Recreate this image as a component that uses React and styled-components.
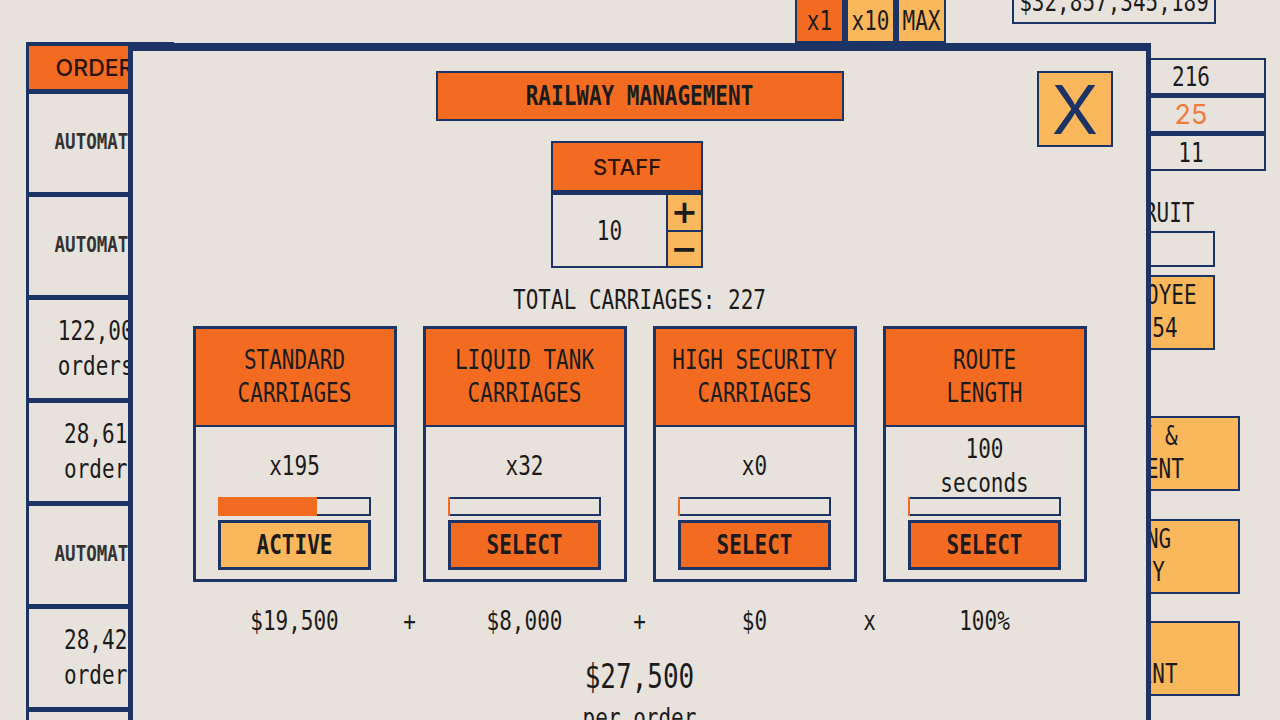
import styled, { createGlobalStyle } from "styled-components";

const navy = "#1c3366";
const orange = "#f26b21";
const amber = "#fab75b";
const paper = "#e8e2dc";
const ink = "#1b1b1b";

const GlobalStyle = createGlobalStyle`
  html, body {
    margin: 0;
    padding: 0;
    background: ${paper};
    overflow: hidden;
  }
  #root {
    width: 1280px;
    height: 720px;
  }
`;

// tall, narrow mono lettering used through the whole game ui;
// line height is divided by the stretch so stacked lines keep their pitch
const Mono = styled.span`
  display: inline-block;
  font-family: "DejaVu Sans Mono", "Liberation Mono", monospace;
  font-size: ${(p) => p.$size || 21}px;
  font-weight: ${(p) => (p.$bold ? 700 : 400)};
  line-height: ${(p) => (p.$lh || 26) / (p.$stretch || 1.3)}px;
  color: ${(p) => p.$color || ink};
  transform: scaleY(${(p) => p.$stretch || 1.3});
  white-space: nowrap;
`;

const Screen = styled.div`
  position: relative;
  width: 1280px;
  height: 720px;
  overflow: hidden;
  display: flex;
  align-items: flex-start;
`;

/* ---------- orders column ---------- */

const OrderList = styled.div`
  margin: 42px 0 0 26px;
  width: 148px;
  flex-shrink: 0;
  box-sizing: border-box;
  border: 3px solid ${navy};
  border-top-width: 4px;
  border-bottom: none;
  background: ${navy};
  display: flex;
  flex-direction: column;
  gap: 5px;
`;

const OrderHead = styled.div`
  height: 43px;
  background: ${orange};
  display: flex;
  align-items: center;
  justify-content: center;
  padding-left: 4px;
  font-family: Inter, "Noto Sans", sans-serif;
  font-size: 23px;
  font-weight: 500;
  color: #2a1408;
`;

const OrderRow = styled.div`
  height: 98px;
  background: ${paper};
  display: flex;
  flex-direction: column;
  align-items: center;
  justify-content: center;
  padding-left: 4px;
`;

/* ---------- speed multiplier ---------- */

const Middle = styled.div`
  flex: 1;
  display: flex;
  justify-content: flex-end;
  padding-right: 66px;
`;

const Multipliers = styled.div`
  margin-top: -10px;
  display: flex;
  gap: 6px;
  padding: 2px 2px 4px;
  background: ${navy};
`;

const MultButton = styled.button`
  width: 45px;
  height: 49px;
  padding: 8px 0 0;
  border: 0;
  background: ${(p) => (p.$on ? orange : amber)};
  display: flex;
  align-items: center;
  justify-content: center;
`;

/* ---------- right column ---------- */

const Side = styled.div`
  width: 268px;
  flex-shrink: 0;
  display: flex;
  flex-direction: column;
  align-items: flex-start;
`;

const Money = styled.div`
  margin-top: -20px;
  width: 204px;
  height: 44px;
  box-sizing: border-box;
  border: 2px solid ${navy};
  display: flex;
  align-items: center;
  justify-content: center;
`;

const Stats = styled.div`
  margin: 34px 0 0 104px;
  width: 150px;
  box-sizing: border-box;
  border: 2px solid ${navy};
  background: ${navy};
  display: flex;
  flex-direction: column;
  gap: 5px;
`;

const StatRow = styled.div`
  height: 33px;
  background: ${paper};
  display: flex;
  align-items: center;
  justify-content: center;
`;

const Accent = styled.span`
  font-family: Inter, "Noto Sans", sans-serif;
  font-size: 27px;
  color: #f07a3c;
`;

const SideLabel = styled.div`
  margin: 27px 0 0 94px;
  height: 30px;
  display: flex;
  align-items: center;
`;

const SideInput = styled.div`
  margin: 3px 0 0 50px;
  width: 153px;
  height: 36px;
  box-sizing: border-box;
  border: 2px solid ${navy};
`;

const SideButton = styled.div`
  margin: ${(p) => p.$gap}px 0 0 ${(p) => p.$left}px;
  width: ${(p) => p.$width}px;
  height: 75px;
  box-sizing: border-box;
  border: 2px solid ${navy};
  background: ${amber};
  display: flex;
  align-items: center;
  justify-content: center;
  text-align: center;
`;

/* ---------- railway dialog ---------- */

const Modal = styled.section`
  position: absolute;
  left: 128px;
  top: 43px;
  width: 1023px;
  height: 720px;
  box-sizing: border-box;
  border: 5px solid ${navy};
  border-top-width: 8px;
  background: ${paper};
  display: flex;
  flex-direction: column;
  align-items: center;
  padding-top: 20px;
  z-index: 2;
`;

const CloseButton = styled.button`
  position: absolute;
  top: 20px;
  right: 33px;
  width: 76px;
  height: 76px;
  box-sizing: border-box;
  padding: 0;
  border: 2px solid ${navy};
  background: ${amber};
  display: flex;
  align-items: center;
  justify-content: center;
  font-family: Inter, "Noto Sans", sans-serif;
  font-size: 68px;
  font-weight: 400;
  line-height: 1;
  color: ${navy};
`;

const TitleBar = styled.h1`
  margin: 0;
  width: 408px;
  height: 50px;
  box-sizing: border-box;
  border: 2px solid ${navy};
  background: ${orange};
  display: flex;
  align-items: center;
  justify-content: center;
`;

const StaffBox = styled.div`
  margin: 20px 25px 0 0;
  width: 152px;
  box-sizing: border-box;
  border: 2px solid ${navy};
`;

const StaffHead = styled.div`
  height: 47px;
  background: ${orange};
  border-bottom: 5px solid ${navy};
  display: flex;
  align-items: center;
  justify-content: center;
  font-family: Inter, "Noto Sans", sans-serif;
  font-size: 22px;
  font-weight: 500;
  color: #2a1408;
`;

const StaffBody = styled.div`
  height: 71px;
  display: flex;
`;

const StaffValue = styled.div`
  flex: 1;
  border-right: 2px solid ${navy};
  display: flex;
  align-items: center;
  justify-content: center;
`;

const Stepper = styled.div`
  width: 33px;
  display: flex;
  flex-direction: column;
  gap: 2px;
  background: ${navy};
`;

const StepButton = styled.button`
  flex: 1;
  padding: 0;
  border: 0;
  background: ${amber};
  font-family: "DejaVu Sans", sans-serif;
  font-size: 32px;
  font-weight: 700;
  line-height: 1;
  color: ${ink};
`;

const Total = styled.div`
  margin-top: 17px;
  height: 30px;
  display: flex;
  align-items: center;
`;

const Cards = styled.div`
  margin-top: 11px;
  display: grid;
  grid-template-columns: repeat(4, 204px);
  gap: 26px;
`;

const Card = styled.div`
  height: 256px;
  box-sizing: border-box;
  border: 3px solid ${navy};
  display: flex;
  flex-direction: column;
`;

const CardHead = styled.div`
  height: 96px;
  flex-shrink: 0;
  background: ${orange};
  border-bottom: 2px solid ${navy};
  display: flex;
  align-items: center;
  justify-content: center;
  text-align: center;
`;

const CardBody = styled.div`
  flex: 1;
  display: flex;
  flex-direction: column;
  align-items: center;
  padding-bottom: 9px;
`;

const CardValue = styled.div`
  flex: 1;
  padding-top: 9px;
  display: flex;
  align-items: center;
  justify-content: center;
  text-align: center;
`;

const Bar = styled.div`
  width: 153px;
  height: 19px;
  flex-shrink: 0;
  display: flex;
`;

const BarFill = styled.div`
  min-width: 2px;
  background: ${orange};
`;

const BarRest = styled.div`
  flex: 1;
  box-sizing: border-box;
  border: 2px solid ${navy};
  border-left: none;
`;

const PickButton = styled.button`
  margin-top: 4px;
  width: 153px;
  height: 50px;
  flex-shrink: 0;
  box-sizing: border-box;
  padding: 0;
  border: 3px solid ${navy};
  background: ${(p) => (p.$active ? amber : orange)};
  display: flex;
  align-items: center;
  justify-content: center;
`;

const Formula = styled.div`
  margin-top: 24px;
  display: grid;
  grid-template-columns: 204px 26px 204px 26px 204px 26px 204px;
  justify-items: center;
  align-items: center;
  height: 30px;
`;

const Grand = styled.div`
  margin-top: 20px;
  height: 40px;
  display: flex;
  align-items: center;
`;

const PerOrder = styled.div`
  margin-top: 4px;
  height: 36px;
  display: flex;
  align-items: center;
`;

const orders = [
  ["AUTOMATIC"],
  ["AUTOMATIC"],
  ["122,000", "orders"],
  ["28,610", "orders"],
  ["AUTOMATIC"],
  ["28,420", "orders"],
  ["AUTOMATIC"],
];

const carriages = [
  { title: ["STANDARD", "CARRIAGES"], value: ["x195"], fill: 65, active: true },
  { title: ["LIQUID TANK", "CARRIAGES"], value: ["x32"], fill: 0 },
  { title: ["HIGH SECURITY", "CARRIAGES"], value: ["x0"], fill: 0 },
  { title: ["ROUTE", "LENGTH"], value: ["100", "seconds"], fill: 0 },
];

const Lines = ({ lines, ...rest }) => (
  <Mono {...rest}>
    {lines.map((l, i) => (
      <span key={i}>
        {i > 0 && <br />}
        {l}
      </span>
    ))}
  </Mono>
);

const App = () => {
  return (
    <>
      <GlobalStyle />
      <Screen>
        <OrderList>
          <OrderHead>ORDERS</OrderHead>
          {orders.map((o, i) => (
            <OrderRow key={i}>
              {o.length === 1 ? (
                <Mono $size={17.5} $stretch={1.2} $bold $color="#333">
                  {o[0]}
                </Mono>
              ) : (
                <Lines lines={o} $lh={35} />
              )}
            </OrderRow>
          ))}
        </OrderList>

        <Middle>
          <Multipliers>
            <MultButton $on>
              <Mono>x1</Mono>
            </MultButton>
            <MultButton>
              <Mono>x10</Mono>
            </MultButton>
            <MultButton>
              <Mono>MAX</Mono>
            </MultButton>
          </Multipliers>
        </Middle>

        <Side>
          <Money>
            <Mono>$32,857,345,189</Mono>
          </Money>
          <Stats>
            <StatRow>
              <Mono>216</Mono>
            </StatRow>
            <StatRow>
              <Accent>25</Accent>
            </StatRow>
            <StatRow>
              <Mono>11</Mono>
            </StatRow>
          </Stats>
          <SideLabel>
            <Mono>RECRUIT</Mono>
          </SideLabel>
          <SideInput />
          <SideButton $gap={8} $left={65} $width={138}>
            <Lines lines={["EMPLOYEE", "$4.54"]} $lh={33} />
          </SideButton>
          <SideButton $gap={66} $left={2} $width={226}>
            <Lines lines={["SAFETY &", "EQUIPMENT"]} $lh={33} />
          </SideButton>
          <SideButton $gap={28} $left={2} $width={226}>
            <Lines lines={["BOOKING", "AGENCY"]} $lh={33} />
          </SideButton>
          <SideButton $gap={27} $left={2} $width={226}>
            <Lines lines={["NEW", "SHIPMENT"]} $lh={33} />
          </SideButton>
        </Side>

        <Modal>
          <CloseButton>X</CloseButton>
          <TitleBar>
            <Mono $bold>RAILWAY MANAGEMENT</Mono>
          </TitleBar>

          <StaffBox>
            <StaffHead>STAFF</StaffHead>
            <StaffBody>
              <StaffValue>
                <Mono>10</Mono>
              </StaffValue>
              <Stepper>
                <StepButton>+</StepButton>
                <StepButton>−</StepButton>
              </Stepper>
            </StaffBody>
          </StaffBox>

          <Total>
            <Mono>TOTAL CARRIAGES: 227</Mono>
          </Total>

          <Cards>
            {carriages.map((c) => (
              <Card key={c.title.join(" ")}>
                <CardHead>
                  <Lines lines={c.title} $lh={33} />
                </CardHead>
                <CardBody>
                  <CardValue>
                    <Lines lines={c.value} $lh={34} />
                  </CardValue>
                  <Bar>
                    <BarFill style={{ width: `${c.fill}%` }} />
                    <BarRest />
                  </Bar>
                  <PickButton $active={c.active}>
                    <Mono $bold>{c.active ? "ACTIVE" : "SELECT"}</Mono>
                  </PickButton>
                </CardBody>
              </Card>
            ))}
          </Cards>

          <Formula>
            <Mono>$19,500</Mono>
            <Mono>+</Mono>
            <Mono>$8,000</Mono>
            <Mono>+</Mono>
            <Mono>$0</Mono>
            <Mono>x</Mono>
            <Mono>100%</Mono>
          </Formula>

          <Grand>
            <Mono $size={26} $lh={34}>$27,500</Mono>
          </Grand>
          <PerOrder>
            <Mono>per order</Mono>
          </PerOrder>
        </Modal>
      </Screen>
    </>
  );
};

export default App;
